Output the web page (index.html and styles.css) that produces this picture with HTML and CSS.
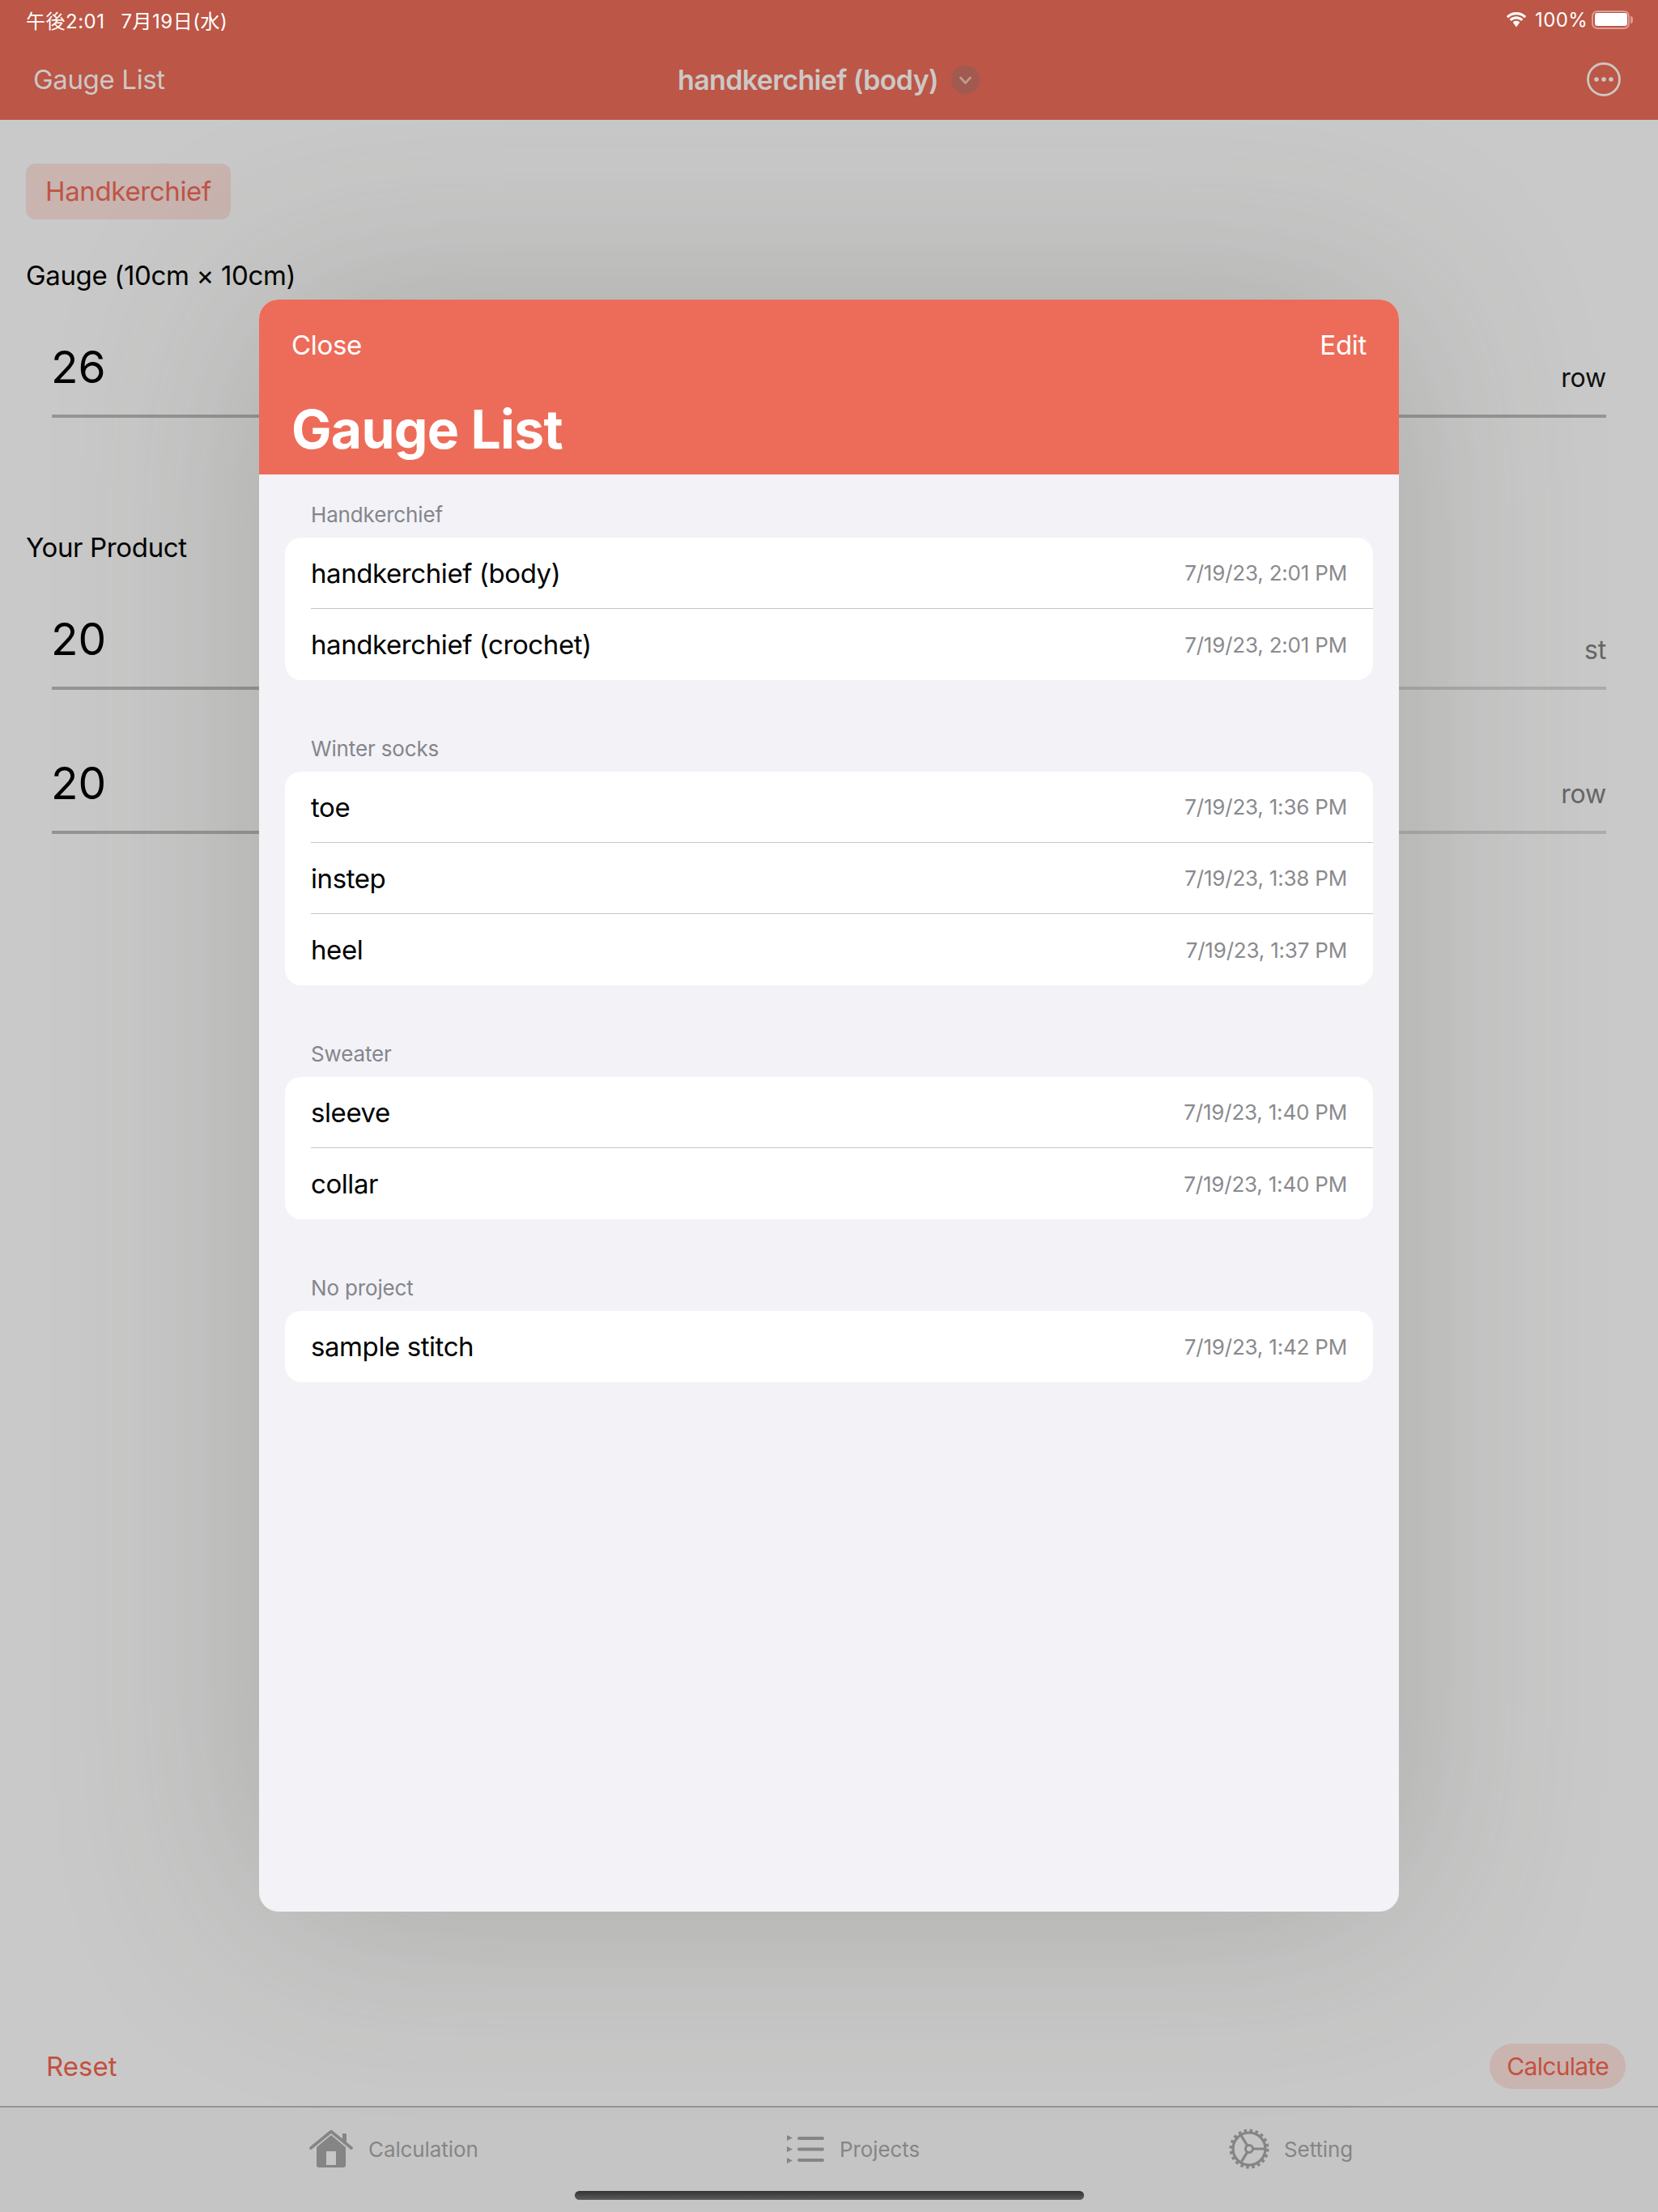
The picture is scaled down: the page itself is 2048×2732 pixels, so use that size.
FILE: index.html
```html
<!DOCTYPE html>
<html lang="ja">
<head>
<meta charset="utf-8">
<title>Gauge List</title>
<link rel="stylesheet" href="styles.css">
</head>
<body>
<div class="app">
  <header class="topbar">
    <div class="status">
      <div class="status-time"><span>午後2:01</span><span>7月19日(水)</span></div>
      <div class="status-right">
        <svg class="wifi" viewBox="0 0 28 20"><path d="M14 4.2c3.900 0 7.400 1.500 10 4l2.200-2.300C23 2.800 18.700.9 14 .9S5 2.800 1.800 5.900L4 8.200c2.600-2.500 6.100-4 10-4z" fill="#fff"/><path d="M14 9.500c2.400 0 4.600 1 6.200 2.500l2.200-2.300C20.200 7.600 17.300 6.300 14 6.300S7.800 7.600 5.600 9.700L7.800 12c1.600-1.500 3.800-2.500 6.200-2.500z" fill="#fff"/><path d="M14 11.700c-1.700 0-3.200.7-4.300 1.700L14 19.500l4.300-6.100c-1.100-1-2.600-1.700-4.300-1.700z" fill="#fff"/></svg>
        <span class="battery-text">100%</span>
        <div class="battery"><div class="battery-fill"></div></div>
        <div class="battery-nub"></div>
      </div>
    </div>
    <nav class="navbar">
      <div class="nav-left">Gauge List</div>
      <div class="nav-title">
        <span>handkerchief (body)</span>
        <span class="nav-chevron"><svg viewBox="0 0 35 35"><path d="M11.500 15l6 6.500 6-6.500" fill="none" stroke="#c29b93" stroke-width="2.600" stroke-linecap="round" stroke-linejoin="round"/></svg></span>
      </div>
      <svg class="nav-more" viewBox="0 0 44 44"><circle cx="22" cy="22" r="19.500" fill="none" stroke="#ccc6c4" stroke-width="2.800"/><circle cx="13" cy="22" r="2.800" fill="#ccc6c4"/><circle cx="22" cy="22" r="2.800" fill="#ccc6c4"/><circle cx="31" cy="22" r="2.800" fill="#ccc6c4"/></svg>
    </nav>
  </header>

  <main class="content">
    <div class="chip">Handkerchief</div>
    <div class="group-label">Gauge (10cm × 10cm)</div>
    <div class="field">
      <div class="field-cell"><span class="field-value">26</span></div>
      <div class="field-cell field-cell-unit"><span class="field-unit">row</span></div>
    </div>
    <div class="group-label group-label-second">Your Product</div>
    <div class="field">
      <div class="field-cell"><span class="field-value">20</span></div>
      <div class="field-cell field-cell-unit field-cell-dim"><span class="field-unit field-unit-dim">st</span></div>
    </div>
    <div class="field field-next">
      <div class="field-cell"><span class="field-value">20</span></div>
      <div class="field-cell field-cell-unit field-cell-dim"><span class="field-unit field-unit-dim">row</span></div>
    </div>
  </main>

  <div class="actions">
    <span class="reset">Reset</span>
    <span class="calculate">Calculate</span>
  </div>

  <footer class="tabbar">
    <div class="tab tab-first">
      <svg class="tab-home" viewBox="0 0 54 48"><path d="M9 22L27 7l18 15v22a3 3 0 0 1-3 3H12a3 3 0 0 1-3-3z" fill="#858585"/><rect x="21" y="27" width="12" height="17" fill="#c6c6c6"/><path d="M2 23L27 2.500 52 23" fill="none" stroke="#858585" stroke-width="3.600" stroke-linecap="round" stroke-linejoin="round"/><rect x="41" y="5" width="5" height="11" fill="#858585"/></svg>
      <span>Calculation</span>
    </div>
    <div class="tab tab-second">
      <svg class="tab-list" viewBox="0 0 46 36"><path d="M0 2v7l7-3.500zM0 16v7l7-3.500zM0 30v7l7-3.500z" fill="#858585" transform="translate(0 -1)"/><rect x="13" y="3" width="33" height="4" rx="2" fill="#858585"/><rect x="13" y="16.500" width="33" height="4" rx="2" fill="#858585"/><rect x="13" y="30" width="33" height="4" rx="2" fill="#858585"/></svg>
      <span>Projects</span>
    </div>
    <div class="tab">
      <svg class="tab-gear" viewBox="0 0 52 52"><g fill="none" stroke="#858585"><circle cx="26" cy="26" r="20" stroke-width="3.200"/><circle cx="26" cy="26" r="21.500" stroke-width="6" stroke-dasharray="3.400 3.350"/><circle cx="26" cy="26" r="4.500" stroke-width="3"/><path d="M30.500 26H46M23.800 22.100L15.500 8.500M23.800 29.900L15.500 43.500" stroke-width="3.200"/></g></svg>
      <span>Setting</span>
    </div>
  </footer>
  <div class="home-indicator"></div>

  <section class="sheet">
    <div class="sheet-head">
      <div class="sheet-actions"><span>Close</span><span>Edit</span></div>
      <h1 class="sheet-title">Gauge List</h1>
    </div>
    <div class="sheet-body">
      <div class="list-section">
        <div class="section-name">Handkerchief</div>
        <div class="card">
          <div class="row"><span class="row-name">handkerchief (body)</span><span class="row-date">7/19/23, 2:01 PM</span></div>
          <div class="row"><span class="row-name">handkerchief (crochet)</span><span class="row-date">7/19/23, 2:01 PM</span></div>
        </div>
      </div>
      <div class="list-section">
        <div class="section-name">Winter socks</div>
        <div class="card">
          <div class="row"><span class="row-name">toe</span><span class="row-date">7/19/23, 1:36 PM</span></div>
          <div class="row"><span class="row-name">instep</span><span class="row-date">7/19/23, 1:38 PM</span></div>
          <div class="row"><span class="row-name">heel</span><span class="row-date">7/19/23, 1:37 PM</span></div>
        </div>
      </div>
      <div class="list-section">
        <div class="section-name">Sweater</div>
        <div class="card">
          <div class="row"><span class="row-name">sleeve</span><span class="row-date">7/19/23, 1:40 PM</span></div>
          <div class="row"><span class="row-name">collar</span><span class="row-date">7/19/23, 1:40 PM</span></div>
        </div>
      </div>
      <div class="list-section">
        <div class="section-name">No project</div>
        <div class="card">
          <div class="row"><span class="row-name">sample stitch</span><span class="row-date">7/19/23, 1:42 PM</span></div>
        </div>
      </div>
    </div>
  </section>
</div>
</body>
</html>
```
FILE: styles.css
```css
* { box-sizing: border-box; }
html, body { margin: 0; padding: 0; }
body { font-family: Inter, "Noto Sans CJK JP", sans-serif; background: #c9c9c9; }
.app { position: relative; width: 2048px; height: 2732px; display: flex; flex-direction: column; overflow: hidden; background: #c9c9c9; }

.topbar { position: relative; z-index: 1; height: 148px; background: #bc5646; flex: none; }
.status { height: 48px; padding: 0 31px 0 32px; display: flex; justify-content: space-between; align-items: center; color: #fff; }
.status-time { display: flex; gap: 20px; font-size: 24px; letter-spacing: .5px; }
.status-right { display: flex; align-items: center; }
.wifi { width: 28px; height: 20px; margin-right: 9px; }
.battery-text { font-size: 24px; width: 70px; letter-spacing: .4px; }
.battery { width: 47px; height: 23px; border: 2px solid #dc9e94; border-radius: 7px; padding: 1.500px; }
.battery-fill { width: 100%; height: 100%; background: #fff; border-radius: 3px; }
.battery-nub { width: 3px; height: 9px; background: #dc9e94; border-radius: 0 3px 3px 0; margin-left: 1px; }

.navbar { position: relative; height: 100px; padding: 0 45px 0 41px; display: flex; align-items: center; justify-content: space-between; color: #ccc8c6; }
.nav-left { font-size: 33px; letter-spacing: -.35px; }
.nav-title { position: absolute; left: 837px; top: 30px; display: flex; align-items: center; gap: 16px; font-size: 34px; font-weight: 600; letter-spacing: -.65px; }
.nav-chevron { width: 35px; height: 35px; border-radius: 50%; background: #a05a50; display: block; }
.nav-chevron svg { display: block; width: 35px; height: 35px; }
.nav-more { width: 44px; height: 44px; }

.content { flex: 1; padding: 54px 64px 0 32px; }
.chip { display: inline-block; height: 69px; line-height: 69px; padding: 0 24px; border-radius: 12px; background: #c9b4b0; color: #bf5546; font-size: 33px; letter-spacing: -.35px; }
.group-label { margin-top: 49px; font-size: 33px; line-height: 40px; letter-spacing: -.35px; color: #000; }
.group-label-second { margin-top: 140px; }
.field { margin-left: 32px; height: 156px; display: grid; grid-template-columns: 1fr 1fr; }
.field-next { height: 178px; }
.field-cell { padding-bottom: 29px; border-bottom: 4px solid #959693; display: flex; align-items: flex-end; }
.field-cell-unit { justify-content: flex-end; }
.field-cell-dim { border-bottom-color: #adadac; }
.field-value { font-size: 55px; line-height: 60px; font-weight: 380; color: #000; margin-left: -1px; }
.field-unit { font-size: 32px; line-height: 40px; margin-bottom: -4px; letter-spacing: -.2px; color: #111; }
.field-unit-dim { color: #666; }

.actions { flex: none; height: 86px; padding: 0 40px 12px 57px; display: flex; align-items: center; justify-content: space-between; color: #c4503e; }
.reset { font-size: 33px; }
.calculate { height: 56px; line-height: 56px; padding: 0 21px; border-radius: 28px; background: #c9b4b0; font-size: 30px; letter-spacing: -.7px; }

.tabbar { flex: none; height: 131px; background: #c5c5c5; border-top: 2px solid #949494; display: flex; padding: 24px 0 0 382px; font-size: 26px; letter-spacing: -.1px; color: #858585; }
.tab { display: flex; align-items: flex-start; height: 54px; flex: none; }
.tab-first { width: 590px; }
.tab-second { width: 545px; }
.tab span { line-height: 56px; }
.tab-home { width: 54px; height: 48px; margin: 3px 19px 0 0; }
.tab-list { width: 46px; height: 36px; margin: 9px 19px 0 0; }
.tab-gear { width: 52px; height: 52px; margin: 1px 17px 0 0; }
.home-indicator { position: absolute; left: 710px; top: 2706px; width: 629px; height: 11px; border-radius: 6px; background: linear-gradient(#333, #5c5c5c); }

.sheet { position: absolute; left: 320px; top: 370px; width: 1408px; height: 1991px; border-radius: 24px; background: #f2f2f7; box-shadow: 0 0 320px rgba(60,68,50,.22); display: flex; flex-direction: column; }
.sheet-head { height: 216px; flex: none; background: #ed6c59; border-radius: 24px 24px 0 0; color: #fff; padding: 0 40px 0 40px; }
.sheet-actions { height: 112px; display: flex; justify-content: space-between; align-items: center; font-size: 33px; letter-spacing: -.3px; }
.sheet-title { margin: 10px 0 0; font-size: 66px; line-height: 76px; font-weight: 700; letter-spacing: -.7px; }
.sheet-body { padding: 34px 32px 0; }
.list-section { margin-bottom: 69px; }
.section-name { height: 44px; padding-left: 32px; font-size: 26px; line-height: 32px; letter-spacing: -.15px; color: #85858a; }
.card { background: #fff; border-radius: 20px; }
.row { height: 88px; margin-left: 32px; padding-right: 32px; display: flex; justify-content: space-between; align-items: center; border-bottom: 1px solid #c6c6c8; }
.row:last-child { border-bottom: 0; }
.row-name { font-size: 33px; letter-spacing: -.42px; color: #000; }
.row-date { font-size: 26px; letter-spacing: -.2px; color: #8a8a8e; }
```
